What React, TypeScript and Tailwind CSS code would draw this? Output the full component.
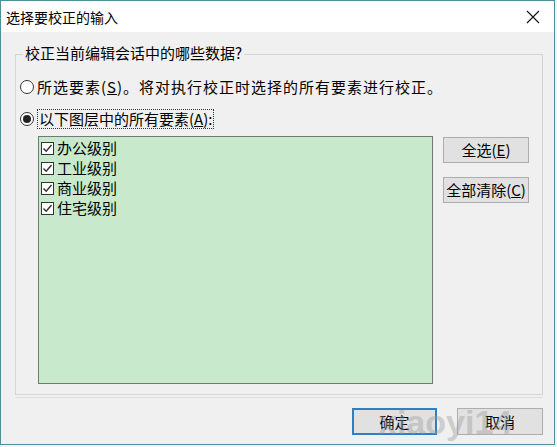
import React from "react";

const font = { fontFamily: '"Noto Sans CJK SC", "Microsoft YaHei", sans-serif' };

function Check() {
  return (
    <span className="inline-flex w-[13px] h-[13px] border border-[#333] bg-white items-center justify-center shrink-0">
      <svg width="11" height="11" viewBox="0 0 11 11">
        <path d="M1.5 5.5 L4.2 8.2 L9.5 2" fill="none" stroke="#333" strokeWidth="1.4" />
      </svg>
    </span>
  );
}

function Radio({ on }: { on?: boolean }) {
  return (
    <span className="inline-flex w-[14px] h-[14px] rounded-full border border-[#333] bg-white items-center justify-center shrink-0">
      {on && <span className="w-[8px] h-[8px] rounded-full bg-[#222]" />}
    </span>
  );
}

export default function App() {
  const items = ["办公级别", "工业级别", "商业级别", "住宅级别"];
  return (
    <div className="w-[557px] h-[447px] bg-[#eef3f4] relative overflow-hidden text-[#000]" style={font}>
      <div className="w-[555px] h-[445px] border border-[#4f8e9b] flex flex-col">
        <div className="h-[31px] bg-white flex items-center justify-between pl-[5px] pr-[14px]">
          <span className="text-[14px] leading-[20px]">选择要校正的输入</span>
          <svg width="14" height="14" viewBox="0 0 14 14">
            <path d="M1 1 L13 13 M13 1 L1 13" stroke="#111" strokeWidth="1.1" />
          </svg>
        </div>
        <div className="flex-1 bg-[#f0f0f0] pl-[14px] pr-[11px] pt-[22px] text-[15px]">
          <div className="relative border border-[#d5d5d5] h-[341px] pt-[22px] pl-[4px]">
            <span className="absolute top-[-12px] left-[7px] bg-[#f0f0f0] px-[2px] leading-[20px]">
              校正当前编辑会话中的哪些数据?
            </span>
            <div className="flex items-center gap-[3px] h-[20px]">
              <Radio />
              <span className="leading-[20px] tracking-[1px]">所选要素(<u>S</u>)。将对执行校正时选择的所有要素进行校正。</span>
            </div>
            <div className="flex items-center gap-[3px] h-[20px] mt-[12px]">
              <Radio on />
              <span className="leading-[18px] border border-dotted border-[#333] px-[1px]">
                以下图层中的所有要素(<u>A</u>):
              </span>
            </div>
            <div className="flex mt-[7px] ml-[18px]">
              <div className="w-[395px] h-[248px] bg-[#c8e9cc] border border-[#6f7a72] pt-[1px] pl-[2px]">
                {items.map((t) => (
                  <div key={t} className="flex items-center gap-[3px] h-[20px]">
                    <Check />
                    <span className="leading-[20px]">{t}</span>
                  </div>
                ))}
              </div>
              <div className="flex flex-col gap-[14px] ml-[10px] pt-[1px]">
                <button className="w-[86px] h-[26px] bg-[#e1e1e1] border border-[#adadad] leading-[20px]">
                  全选(<u>E</u>)
                </button>
                <button className="w-[86px] h-[26px] bg-[#e1e1e1] border border-[#adadad] leading-[20px]">
                  全部清除(<u>C</u>)
                </button>
              </div>
            </div>
          </div>
          <div className="h-[1px] bg-[#dcdcdc] mt-[2px]" />
          <div className="flex justify-end gap-[20px] mt-[10px]">
            <button className="w-[85px] h-[27px] bg-[#e1e1e1] border-2 border-[#2f7fc4] leading-[20px]">确定</button>
            <button className="w-[86px] h-[27px] bg-[#e1e1e1] border border-[#adadad] leading-[20px]">取消</button>
          </div>
        </div>
      </div>
      <div
        className="absolute left-[378px] top-[402px] text-[34px] font-bold text-[#9a9a9a] opacity-40 pointer-events-none leading-[40px]"
        style={{ fontFamily: '"Liberation Sans", Arial, sans-serif' }}
      >
        xiaoyi14
      </div>
    </div>
  );
}
